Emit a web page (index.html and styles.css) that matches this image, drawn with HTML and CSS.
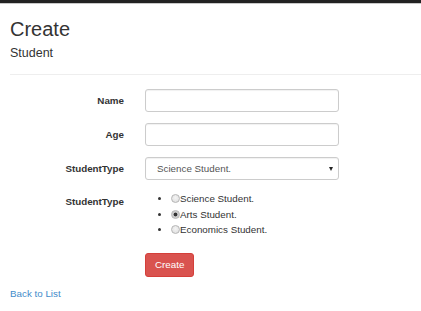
FILE: index.html
```html
<!DOCTYPE html>
<html lang="en">
<head>
  <meta charset="UTF-8" />
  <title>Create - Student</title>
  <link rel="stylesheet" href="styles.css">
</head>
<body>

  <div class="navbar"></div>

  <div class="container">
    <h2>Create</h2>
    <h4>Student</h4>
    <hr />

    <form class="form-horizontal">
      <div class="form-group">
        <label class="control-label" for="Name">Name</label>
        <div class="field">
          <input class="form-control" type="text" id="Name" />
        </div>
      </div>

      <div class="form-group">
        <label class="control-label" for="Age">Age</label>
        <div class="field">
          <input class="form-control" type="text" id="Age" />
        </div>
      </div>

      <div class="form-group">
        <label class="control-label" for="StudentType">StudentType</label>
        <div class="field select-wrap">
          <select class="form-control" id="StudentType">
            <option>Science Student.</option>
            <option>Arts Student.</option>
            <option>Economics Student.</option>
          </select>
          <span class="caret"></span>
        </div>
      </div>

      <div class="form-group">
        <label class="control-label radio-label">StudentType</label>
        <div class="field">
          <ul class="radio-list">
            <li><input type="radio" name="type" value="0" />Science Student.</li>
            <li><input type="radio" name="type" value="1" checked />Arts Student.</li>
            <li><input type="radio" name="type" value="2" />Economics Student.</li>
          </ul>
        </div>
      </div>

      <div class="form-group">
        <div></div>
        <div class="field">
          <button type="button" class="btn btn-danger">Create</button>
        </div>
      </div>
    </form>

    <div class="back">
      <a href="#">Back to List</a>
    </div>
  </div>

</body>
</html>
```

FILE: styles.css
```css
body {
  font-family: "Liberation Sans", Arial, sans-serif;
  font-size: 9.8px;
  color: #333;
  background-color: #fff;
  margin: 0;
  padding: 0;
}

.navbar {
  height: 3px;
  background-color: #222;
  border-bottom: 1px solid #c8c8c8;
}

.container {
  padding: 0 0 0 10px;
}

h2 {
  font-size: 20px;
  font-weight: normal;
  line-height: 22px;
  margin: 14px 0 0;
}

h4 {
  font-size: 12.5px;
  font-weight: normal;
  line-height: 14px;
  margin: 6px 0 0;
}

hr {
  border: 0;
  border-top: 1px solid #eee;
  margin: 14px 0 0;
}

.form-horizontal {
  padding-top: 14px;
}

.form-group {
  display: grid;
  grid-template-columns: 114px 194px;
  column-gap: 21px;
  margin-bottom: 11px;
}

.control-label {
  text-align: right;
  font-weight: bold;
  line-height: 23px;
}

.radio-label {
  line-height: 15.5px;
  padding-top: 3px;
}

.form-control {
  display: block;
  box-sizing: border-box;
  width: 100%;
  height: 23px;
  margin: 0;
  padding: 0 11px;
  font-family: inherit;
  font-size: 9.8px;
  color: #555;
  background-color: #fff;
  border: 1px solid #ccc;
  border-radius: 3px;
  box-shadow: inset 0 1px 1px rgba(0, 0, 0, 0.06);
}

.select-wrap {
  position: relative;
}

select.form-control {
  appearance: none;
  -webkit-appearance: none;
  outline: none;
}

.caret {
  position: absolute;
  right: 6px;
  top: 10px;
  border-left: 2.5px solid transparent;
  border-right: 2.5px solid transparent;
  border-top: 4px solid #222;
}

.radio-list {
  margin: 0;
  padding: 0 0 0 26px;
  line-height: 15.5px;
  list-style: disc;
}

.radio-list input {
  appearance: none;
  -webkit-appearance: none;
  box-sizing: border-box;
  width: 9px;
  height: 9px;
  margin: 0;
  vertical-align: -1px;
  border: 1px solid #b5b5b5;
  border-radius: 50%;
  background: radial-gradient(circle at 50% 40%, #f4f4f4, #dcdcdc);
}

.radio-list input:checked {
  background: radial-gradient(circle, #333 0, #333 1.6px, #c4c4c4 2.2px, #e8e8e8 100%);
}

.form-group:last-child {
  margin-top: 15px;
  margin-bottom: 0;
}

.btn {
  height: 24px;
  padding: 0 9px;
  font-family: inherit;
  font-size: 9.8px;
  border-radius: 3px;
  cursor: pointer;
}

.btn-danger {
  color: #fff;
  background-color: #d9534f;
  border: 1px solid #d43f3a;
}

.back {
  margin-top: 10px;
  line-height: 14px;
}

.back a {
  color: #428bca;
  text-decoration: none;
}
```
